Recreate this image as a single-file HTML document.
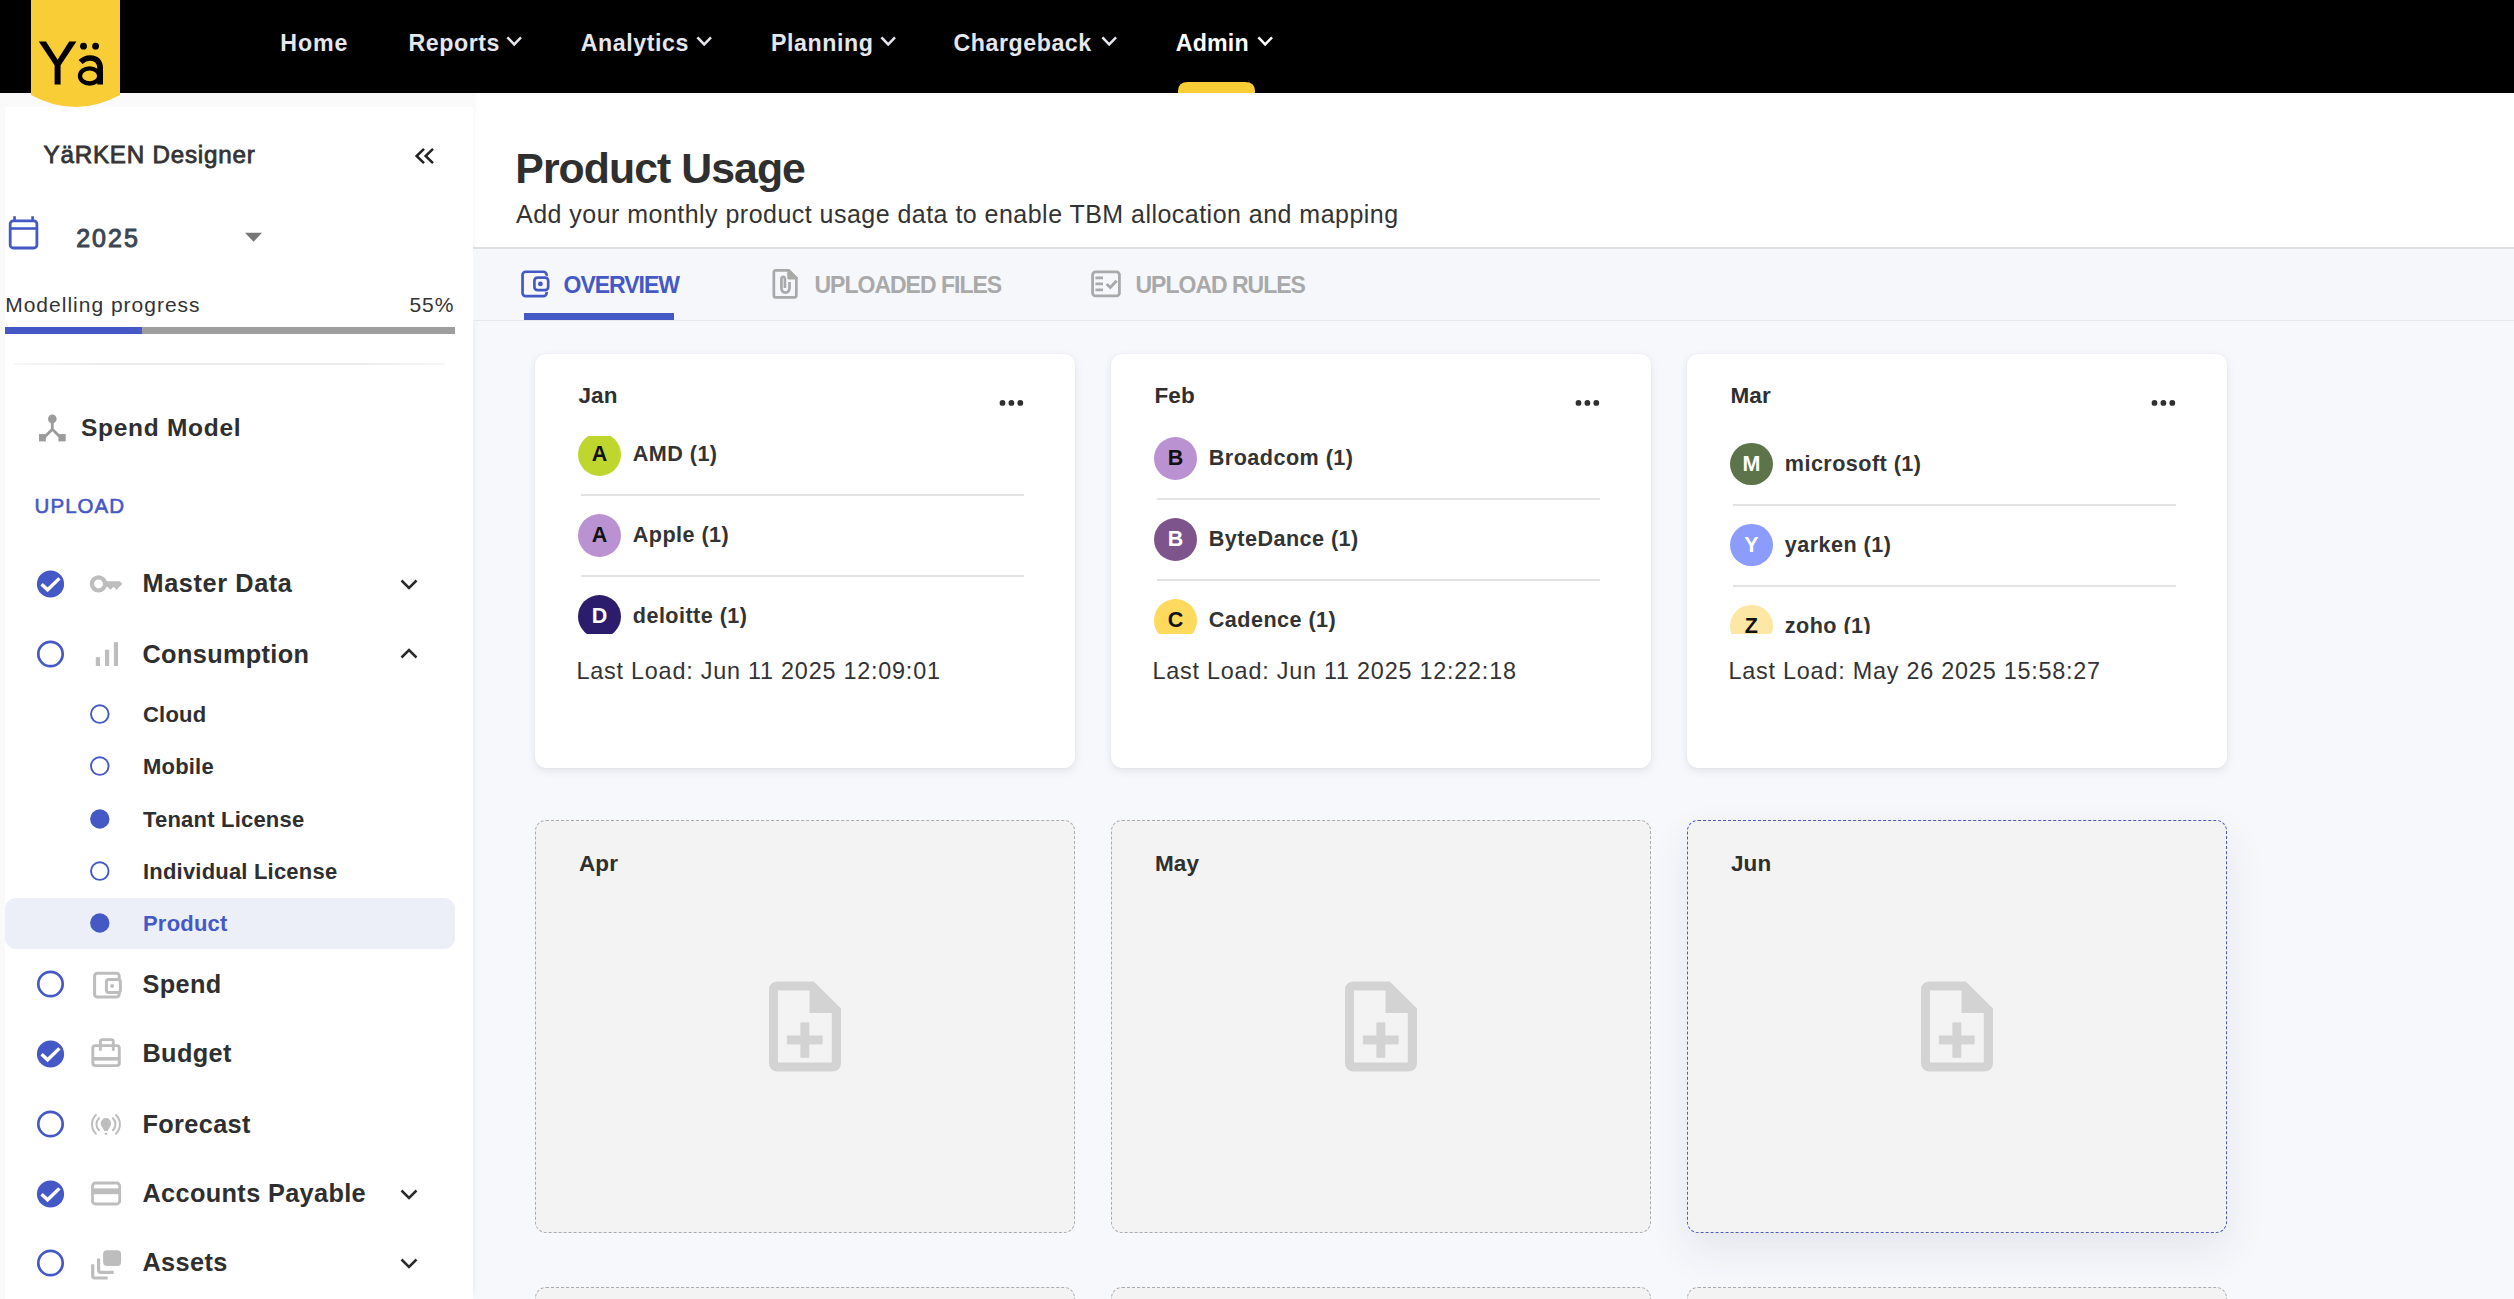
<!DOCTYPE html>
<html><head><meta charset="utf-8"><title>Product Usage</title>
<style>
html,body{margin:0;padding:0;}
body{width:2514px;height:1299px;overflow:hidden;position:relative;background:#f7f8fc;font-family:"Liberation Sans",sans-serif;}
.t{position:absolute;line-height:1;white-space:nowrap;}
svg{position:absolute;overflow:visible;}
</style></head><body>
<div style="position:absolute;left:0px;top:93px;width:473px;height:14px;background:#fafafb;"></div>
<div style="position:absolute;left:0px;top:93px;width:5px;height:1206px;background:#fafafb;"></div>
<div style="position:absolute;left:5px;top:107px;width:468px;height:1192px;background:#ffffff;box-shadow:5px 0 6px -5px rgba(40,50,90,0.08);"></div>
<div style="position:absolute;left:473px;top:93px;width:2041px;height:154px;background:#ffffff;box-shadow:inset 6px 0 6px -6px rgba(0,0,0,0.06);"></div>
<div style="position:absolute;left:473px;top:247px;width:2041px;height:1.5px;background:#dedfe3;"></div>
<div style="position:absolute;left:473px;top:248.5px;width:2041px;height:71.5px;background:#f6f7fb;"></div>
<div style="position:absolute;left:473px;top:320px;width:2041px;height:1px;background:#e6e7eb;"></div>
<div style="position:absolute;left:0px;top:0px;width:2514px;height:93px;background:#000;"></div>
<svg style="left:0;top:0" width="130" height="112"><path d="M31,0 H120 V95 Q75.5,119 31,95 Z" fill="#f9cd36"/></svg>
<svg style="left:0;top:0" width="130" height="100"><path d="M38.8,41.5 H46 L57.6,59.8 L69.2,41.5 H76.4 L60.6,65.2 V84.6 H54.6 V65.2 Z" fill="#000"/><path d="M80.6,62 C83.8,58.9 86.8,58 90.2,58 C96.6,58 100.15,61.6 100.15,68.5 V84.6" fill="none" stroke="#000" stroke-width="5.7"/><ellipse cx="89.6" cy="75.9" rx="9.6" ry="7.6" fill="none" stroke="#000" stroke-width="4.3"/><circle cx="83.5" cy="46.2" r="3.4" fill="#000"/><circle cx="95.6" cy="46.2" r="3.4" fill="#000"/></svg>
<div class="t" style="left:280.3px;top:31.7px;font-size:23.20px;font-weight:700;color:#e6e6ef;letter-spacing:0.90px;">Home</div>
<div class="t" style="left:408.5px;top:31.7px;font-size:23.20px;font-weight:700;color:#e6e6ef;letter-spacing:0.55px;">Reports</div>
<svg style="left:507px;top:37px" width="15" height="10"><path d="M1.2,1.2 L7.2,7.4 L13.2,1.2" fill="none" stroke="#e6e6ef" stroke-width="2.4" stroke-linecap="square"/></svg>
<div class="t" style="left:580.8px;top:31.7px;font-size:23.20px;font-weight:700;color:#e6e6ef;letter-spacing:0.55px;">Analytics</div>
<svg style="left:697px;top:37px" width="15" height="10"><path d="M1.2,1.2 L7.2,7.4 L13.2,1.2" fill="none" stroke="#e6e6ef" stroke-width="2.4" stroke-linecap="square"/></svg>
<div class="t" style="left:771.1px;top:31.7px;font-size:23.20px;font-weight:700;color:#e6e6ef;letter-spacing:0.55px;">Planning</div>
<svg style="left:880.5px;top:37px" width="15" height="10"><path d="M1.2,1.2 L7.2,7.4 L13.2,1.2" fill="none" stroke="#e6e6ef" stroke-width="2.4" stroke-linecap="square"/></svg>
<div class="t" style="left:953.5px;top:31.7px;font-size:23.20px;font-weight:700;color:#e6e6ef;letter-spacing:0.55px;">Chargeback</div>
<svg style="left:1101.6px;top:37px" width="15" height="10"><path d="M1.2,1.2 L7.2,7.4 L13.2,1.2" fill="none" stroke="#e6e6ef" stroke-width="2.4" stroke-linecap="square"/></svg>
<div class="t" style="left:1175.7px;top:31.7px;font-size:23.20px;font-weight:700;color:#ffffff;letter-spacing:0.20px;">Admin</div>
<svg style="left:1257.5px;top:37px" width="15" height="10"><path d="M1.2,1.2 L7.2,7.4 L13.2,1.2" fill="none" stroke="#ffffff" stroke-width="2.4" stroke-linecap="square"/></svg>
<svg style="left:1178px;top:82px" width="77" height="11"><path d="M0,11 V9 Q0,0 10,0 H67 Q77,0 77,9 V11 Z" fill="#f9cd36"/></svg>
<div class="t" style="left:43.5px;top:143.4px;font-size:24.20px;font-weight:400;color:#333333;letter-spacing:0.78px;-webkit-text-stroke:0.8px #333333;">YäRKEN Designer</div>
<svg style="left:410px;top:144px" width="30" height="24"><path d="M14,4.8 L6.6,12 L14,19.2 M23,4.8 L15.6,12 L23,19.2" fill="none" stroke="#222" stroke-width="2.5"/></svg>
<svg style="left:0;top:210px" width="50" height="45"><rect x="10.2" y="10.8" width="26.7" height="27.2" rx="3" fill="none" stroke="#4459c6" stroke-width="2.8"/><path d="M10.2,18.5 H36.9" stroke="#4459c6" stroke-width="2.6"/><path d="M14.55,6.2 V11 M32.6,6.2 V11" stroke="#4459c6" stroke-width="2.7"/></svg>
<div class="t" style="left:76.2px;top:225.6px;font-size:25.00px;font-weight:400;color:#3e4652;letter-spacing:2.00px;-webkit-text-stroke:1px #3e4652;">2025</div>
<svg style="left:240px;top:228px" width="30" height="20"><path d="M5,4.8 H22 L13.5,13.8 Z" fill="#777"/></svg>
<div class="t" style="left:5.2px;top:293.9px;font-size:21.00px;font-weight:400;color:#333333;letter-spacing:1.00px;">Modelling progress</div>
<div class="t" style="left:409.5px;top:293.9px;font-size:21.00px;font-weight:400;color:#333333;letter-spacing:0.90px;">55%</div>
<div style="position:absolute;left:5px;top:327px;width:450px;height:7px;background:#9e9e9e;"></div>
<div style="position:absolute;left:5px;top:327px;width:136.5px;height:7px;background:#4459c6;"></div>
<div style="position:absolute;left:14px;top:363px;width:431px;height:2px;background:linear-gradient(90deg,rgba(230,230,230,0.3),#ececec 20%,#ececec 80%,rgba(230,230,230,0.3));"></div>
<svg style="left:30px;top:405px" width="45" height="45"><circle cx="22.3" cy="13.9" r="4.3" fill="#9b9b9b"/><path d="M22.3,14 V24.2 M22.3,24.2 L13,33.5 M22.3,24.2 L31.6,33.5" fill="none" stroke="#9b9b9b" stroke-width="2.8"/><rect x="9" y="29.1" width="6.8" height="7.3" fill="#9b9b9b"/><rect x="28.4" y="29.1" width="7.3" height="7.3" fill="#9b9b9b"/></svg>
<div class="t" style="left:81.0px;top:416.3px;font-size:24.50px;font-weight:700;color:#2f2f2f;letter-spacing:0.71px;">Spend Model</div>
<div class="t" style="left:34.6px;top:495.9px;font-size:20.50px;font-weight:400;color:#4459c6;letter-spacing:1.05px;-webkit-text-stroke:0.6px #4459c6;">UPLOAD</div>
<svg style="left:30px;top:564px" width="42" height="40"><circle cx="20.5" cy="20" r="13.6" fill="#4459c6"/><path d="M11.6,20.2 L17.6,25.8 L29.4,14.4" fill="none" stroke="#fff" stroke-width="3.4"/></svg>
<svg style="left:85px;top:569px" width="42" height="30"><circle cx="13.5" cy="14.9" r="6.6" fill="none" stroke="#bdbdbd" stroke-width="4.2"/><path d="M19.5,12.2 H34.6 L37.4,14.7 L31.5,20.7 L28.6,17.8 L25.5,20.7 L22.3,17.8 H19.5 Z" fill="#bdbdbd"/></svg>
<div class="t" style="left:142.5px;top:571.1px;font-size:25.30px;font-weight:700;color:#2f2f2f;letter-spacing:0.60px;">Master Data</div>
<svg style="left:400px;top:579.2px" width="18" height="11"><path d="M1.5,1.5 L9,9 L16.5,1.5" fill="none" stroke="#2a2a2a" stroke-width="2.5"/></svg>
<svg style="left:30px;top:633.8px" width="42" height="40"><circle cx="20.5" cy="20" r="12.2" fill="none" stroke="#4459c6" stroke-width="2.7"/></svg>
<svg style="left:85px;top:638.8px" width="42" height="30"><rect x="10.8" y="18.2" width="4.2" height="8.8" fill="#bdbdbd"/><rect x="20" y="10.7" width="4.2" height="16.3" fill="#bdbdbd"/><rect x="28.9" y="3.2" width="4.1" height="23.8" fill="#bdbdbd"/></svg>
<div class="t" style="left:142.5px;top:641.6px;font-size:25.30px;font-weight:700;color:#2f2f2f;letter-spacing:0.35px;">Consumption</div>
<svg style="left:400px;top:648.0px" width="18" height="11"><path d="M1.5,9.5 L9,2 L16.5,9.5" fill="none" stroke="#2a2a2a" stroke-width="2.5"/></svg>
<svg style="left:30px;top:963.6px" width="42" height="40"><circle cx="20.5" cy="20" r="12.2" fill="none" stroke="#4459c6" stroke-width="2.7"/></svg>
<svg style="left:85px;top:968.6px" width="42" height="30"><rect x="9.6" y="4.3" width="24.6" height="23.8" rx="2.8" fill="none" stroke="#bdbdbd" stroke-width="3"/><rect x="21.4" y="10.5" width="14" height="13" rx="2.5" fill="#fff" stroke="#bdbdbd" stroke-width="3"/><circle cx="27.1" cy="16.9" r="2" fill="#bdbdbd"/></svg>
<div class="t" style="left:142.5px;top:971.6px;font-size:25.30px;font-weight:700;color:#2f2f2f;letter-spacing:0.35px;">Spend</div>
<svg style="left:30px;top:1034px" width="42" height="40"><circle cx="20.5" cy="20" r="13.6" fill="#4459c6"/><path d="M11.6,20.2 L17.6,25.8 L29.4,14.4" fill="none" stroke="#fff" stroke-width="3.4"/></svg>
<svg style="left:85px;top:1039px" width="42" height="30"><rect x="7.8" y="6.6" width="26.5" height="20" rx="2.6" fill="none" stroke="#bdbdbd" stroke-width="2.9"/><path d="M15.4,11.8 V2.6 Q15.4,0.7 17.3,0.7 H26.4 Q28.3,0.7 28.3,2.6 V11.8" fill="none" stroke="#bdbdbd" stroke-width="2.8"/><rect x="7.8" y="18" width="26.5" height="3.6" fill="#bdbdbd"/></svg>
<div class="t" style="left:142.5px;top:1041.4px;font-size:25.30px;font-weight:700;color:#2f2f2f;letter-spacing:0.35px;">Budget</div>
<svg style="left:30px;top:1103.5px" width="42" height="40"><circle cx="20.5" cy="20" r="12.2" fill="none" stroke="#4459c6" stroke-width="2.7"/></svg>
<svg style="left:85px;top:1108.5px" width="42" height="30"><path d="M10.9,5.9 A13.3,13.3 0 0 0 10.9,24.7 M14,9.3 A8.24,8.24 0 0 0 14,21.3 M31,5.9 A13.3,13.3 0 0 1 31,24.7 M27.9,9.3 A8.24,8.24 0 0 1 27.9,21.3" fill="none" stroke="#bdbdbd" stroke-width="2" stroke-linecap="round"/><path d="M16.1,16.2 A5.2,5.2 0 1 1 25.8,16.2 L22.6,21.9 H19.3 Z" fill="#bdbdbd"/><rect x="19.7" y="23.9" width="2.6" height="1.8" fill="#bdbdbd"/></svg>
<div class="t" style="left:142.5px;top:1112.0px;font-size:25.30px;font-weight:700;color:#2f2f2f;letter-spacing:0.35px;">Forecast</div>
<svg style="left:30px;top:1173.6px" width="42" height="40"><circle cx="20.5" cy="20" r="13.6" fill="#4459c6"/><path d="M11.6,20.2 L17.6,25.8 L29.4,14.4" fill="none" stroke="#fff" stroke-width="3.4"/></svg>
<svg style="left:85px;top:1178.6px" width="42" height="30"><rect x="7.5" y="4" width="27.2" height="21" rx="3" fill="none" stroke="#bdbdbd" stroke-width="2.8"/><rect x="7.5" y="9.4" width="27.2" height="5.8" fill="#bdbdbd"/></svg>
<div class="t" style="left:142.5px;top:1181.1px;font-size:25.30px;font-weight:700;color:#2f2f2f;letter-spacing:0.35px;">Accounts Payable</div>
<svg style="left:400px;top:1188.8px" width="18" height="11"><path d="M1.5,1.5 L9,9 L16.5,1.5" fill="none" stroke="#2a2a2a" stroke-width="2.5"/></svg>
<svg style="left:30px;top:1242.7px" width="42" height="40"><circle cx="20.5" cy="20" r="12.2" fill="none" stroke="#4459c6" stroke-width="2.7"/></svg>
<svg style="left:85px;top:1247.7px" width="42" height="30"><rect x="18.1" y="2.2" width="18" height="15.7" rx="4" fill="#bdbdbd"/><path d="M13.6,10.5 V22 Q13.6,24.3 15.9,24.3 H28.7" fill="none" stroke="#bdbdbd" stroke-width="3.2"/><path d="M7.7,16.3 V27.8 Q7.7,30 10,30 H22.7" fill="none" stroke="#bdbdbd" stroke-width="3.2"/></svg>
<div class="t" style="left:142.5px;top:1250.1px;font-size:25.30px;font-weight:700;color:#2f2f2f;letter-spacing:0.35px;">Assets</div>
<svg style="left:400px;top:1257.9px" width="18" height="11"><path d="M1.5,1.5 L9,9 L16.5,1.5" fill="none" stroke="#2a2a2a" stroke-width="2.5"/></svg>
<div style="position:absolute;left:5.4px;top:898px;width:449.4px;height:51.4px;border-radius:11px;background:#eceef8;"></div>
<svg style="left:85px;top:699.2px" width="30" height="30"><circle cx="14.8" cy="15.1" r="8.8" fill="none" stroke="#4459c6" stroke-width="1.9"/></svg>
<div class="t" style="left:143.0px;top:704.2px;font-size:22.00px;font-weight:700;color:#2f2f2f;letter-spacing:0.20px;">Cloud</div>
<svg style="left:85px;top:751.2px" width="30" height="30"><circle cx="14.8" cy="15.1" r="8.8" fill="none" stroke="#4459c6" stroke-width="1.9"/></svg>
<div class="t" style="left:143.0px;top:756.4px;font-size:22.00px;font-weight:700;color:#2f2f2f;letter-spacing:0.20px;">Mobile</div>
<svg style="left:85px;top:804px" width="30" height="30"><circle cx="14.8" cy="15" r="9.7" fill="#4459c6"/></svg>
<div class="t" style="left:143.0px;top:809.4px;font-size:22.00px;font-weight:700;color:#2f2f2f;letter-spacing:0.20px;">Tenant License</div>
<svg style="left:85px;top:856.3px" width="30" height="30"><circle cx="14.8" cy="15.1" r="8.8" fill="none" stroke="#4459c6" stroke-width="1.9"/></svg>
<div class="t" style="left:143.0px;top:861.2px;font-size:22.00px;font-weight:700;color:#2f2f2f;letter-spacing:0.20px;">Individual License</div>
<svg style="left:85px;top:908.2px" width="30" height="30"><circle cx="14.8" cy="15" r="9.7" fill="#4459c6"/></svg>
<div class="t" style="left:143.0px;top:913.2px;font-size:22.00px;font-weight:700;color:#4459c6;letter-spacing:0.20px;">Product</div>
<div class="t" style="left:515.3px;top:147.1px;font-size:42.80px;font-weight:700;color:#2f2f2f;letter-spacing:-0.95px;">Product Usage</div>
<div class="t" style="left:516.0px;top:201.6px;font-size:25.00px;font-weight:400;color:#333333;letter-spacing:0.47px;">Add your monthly product usage data to enable TBM allocation and mapping</div>
<svg style="left:510px;top:260px" width="50" height="50"><rect x="12.55" y="11.75" width="24" height="24.4" rx="3.2" fill="none" stroke="#4459c6" stroke-width="2.7"/><rect x="24.4" y="17.7" width="13.8" height="12.4" rx="3" fill="#ffffff" stroke="#ffffff" stroke-width="4.3"/><rect x="24.4" y="17.7" width="13.8" height="12.4" rx="3" fill="#f6f7fb" stroke="#4459c6" stroke-width="2.7"/><circle cx="30.4" cy="23.9" r="2.4" fill="#4459c6"/></svg>
<div class="t" style="left:563.5px;top:273.5px;font-size:23.00px;font-weight:700;color:#4459c6;letter-spacing:-1.00px;">OVERVIEW</div>
<div style="position:absolute;left:524px;top:313px;width:150px;height:7px;background:#4459c6;"></div>
<svg style="left:760px;top:260px" width="50" height="50"><path d="M15.2,10.35 H28.6 L36.35,18.1 V35.2 Q36.35,37.35 34.2,37.35 H15.8 Q13.85,37.35 13.85,35.2 V12.5 Q13.85,10.35 15.8,10.35 Z" fill="none" stroke="#a9a9a9" stroke-width="2.7"/><path d="M28.6,10.35 V18.1 H36.35 Z" fill="#a9a9a9" stroke="#a9a9a9" stroke-width="2.7" stroke-linejoin="round"/><path d="M24.9,28 V19.6 Q24.9,16.9 23.2,16.9 Q21.4,16.9 21.4,19.6 V27.8 Q21.4,32.6 25.4,32.6 Q29.5,32.6 29.5,27.8 V22" fill="none" stroke="#a9a9a9" stroke-width="2.7"/></svg>
<div class="t" style="left:814.5px;top:273.5px;font-size:23.00px;font-weight:700;color:#a9a9a9;letter-spacing:-1.00px;">UPLOADED FILES</div>
<svg style="left:1080px;top:260px" width="50" height="50"><rect x="12.6" y="11.8" width="26.8" height="24.1" rx="3" fill="none" stroke="#a9a9a9" stroke-width="2.8"/><path d="M15.4,17.9 H23 M15.4,23.9 H23 M15.4,29.8 H23" stroke="#a9a9a9" stroke-width="2.7"/><path d="M26.6,24 L30.3,27.5 L36.6,20.8" fill="none" stroke="#a9a9a9" stroke-width="2.9"/></svg>
<div class="t" style="left:1135.5px;top:273.5px;font-size:23.00px;font-weight:700;color:#a9a9a9;letter-spacing:-1.00px;">UPLOAD RULES</div>
<div style="position:absolute;left:535px;top:354px;width:540px;height:414px;border-radius:11px;background:#fff;box-shadow:0 3px 9px rgba(40,50,90,0.10),0 0 2px rgba(40,50,90,0.05);"></div><div class="t" style="left:578.5px;top:385.0px;font-size:22.50px;font-weight:700;color:#2f2f2f;letter-spacing:0.10px;">Jan</div><svg style="left:995px;top:394px" width="34" height="18"><circle cx="7.5" cy="8.9" r="2.9" fill="#2f2f2f"/><circle cx="16.4" cy="8.9" r="2.9" fill="#2f2f2f"/><circle cx="25.3" cy="8.9" r="2.9" fill="#2f2f2f"/></svg><div style="position:absolute;left:535px;top:436px;width:540px;height:198px;overflow:hidden;"><div style="position:absolute;left:43px;top:-3.0px;width:42.8px;height:42.8px;border-radius:50%;background:#bfd62f;"></div><div class="t" style="left:43px;width:42.8px;text-align:center;top:7.8px;font-size:21.5px;font-weight:700;color:#111;">A</div><div class="t" style="left:97.8px;top:7.0px;font-size:21.6px;font-weight:700;color:#333;letter-spacing:0.45px;">AMD (1)</div><div style="position:absolute;left:46px;top:57.8px;width:443px;height:2px;background:#e3e3e3;"></div><div style="position:absolute;left:43px;top:78.0px;width:42.8px;height:42.8px;border-radius:50%;background:#bb92d1;"></div><div class="t" style="left:43px;width:42.8px;text-align:center;top:88.8px;font-size:21.5px;font-weight:700;color:#111;">A</div><div class="t" style="left:97.8px;top:88.0px;font-size:21.6px;font-weight:700;color:#333;letter-spacing:0.45px;">Apple (1)</div><div style="position:absolute;left:46px;top:138.8px;width:443px;height:2px;background:#e3e3e3;"></div><div style="position:absolute;left:43px;top:159.0px;width:42.8px;height:42.8px;border-radius:50%;background:#2c1d6c;"></div><div class="t" style="left:43px;width:42.8px;text-align:center;top:169.8px;font-size:21.5px;font-weight:700;color:#fff;">D</div><div class="t" style="left:97.8px;top:169.0px;font-size:21.6px;font-weight:700;color:#333;letter-spacing:0.45px;">deloitte (1)</div></div><div class="t" style="left:576.5px;top:660.0px;font-size:23.40px;font-weight:400;color:#333333;letter-spacing:0.77px;">Last Load: Jun 11 2025 12:09:01</div>
<div style="position:absolute;left:1111px;top:354px;width:540px;height:414px;border-radius:11px;background:#fff;box-shadow:0 3px 9px rgba(40,50,90,0.10),0 0 2px rgba(40,50,90,0.05);"></div><div class="t" style="left:1154.5px;top:385.0px;font-size:22.50px;font-weight:700;color:#2f2f2f;letter-spacing:0.10px;">Feb</div><svg style="left:1571px;top:394px" width="34" height="18"><circle cx="7.5" cy="8.9" r="2.9" fill="#2f2f2f"/><circle cx="16.4" cy="8.9" r="2.9" fill="#2f2f2f"/><circle cx="25.3" cy="8.9" r="2.9" fill="#2f2f2f"/></svg><div style="position:absolute;left:1111px;top:436px;width:540px;height:198px;overflow:hidden;"><div style="position:absolute;left:43px;top:1.0px;width:42.8px;height:42.8px;border-radius:50%;background:#bb92d1;"></div><div class="t" style="left:43px;width:42.8px;text-align:center;top:11.8px;font-size:21.5px;font-weight:700;color:#111;">B</div><div class="t" style="left:97.8px;top:11.0px;font-size:21.6px;font-weight:700;color:#333;letter-spacing:0.45px;">Broadcom (1)</div><div style="position:absolute;left:46px;top:61.8px;width:443px;height:2px;background:#e3e3e3;"></div><div style="position:absolute;left:43px;top:82.0px;width:42.8px;height:42.8px;border-radius:50%;background:#7e548c;"></div><div class="t" style="left:43px;width:42.8px;text-align:center;top:92.8px;font-size:21.5px;font-weight:700;color:#fff;">B</div><div class="t" style="left:97.8px;top:92.0px;font-size:21.6px;font-weight:700;color:#333;letter-spacing:0.45px;">ByteDance (1)</div><div style="position:absolute;left:46px;top:142.8px;width:443px;height:2px;background:#e3e3e3;"></div><div style="position:absolute;left:43px;top:163.0px;width:42.8px;height:42.8px;border-radius:50%;background:#fdd95c;"></div><div class="t" style="left:43px;width:42.8px;text-align:center;top:173.8px;font-size:21.5px;font-weight:700;color:#111;">C</div><div class="t" style="left:97.8px;top:173.0px;font-size:21.6px;font-weight:700;color:#333;letter-spacing:0.45px;">Cadence (1)</div></div><div class="t" style="left:1152.5px;top:660.0px;font-size:23.40px;font-weight:400;color:#333333;letter-spacing:0.77px;">Last Load: Jun 11 2025 12:22:18</div>
<div style="position:absolute;left:1687px;top:354px;width:540px;height:414px;border-radius:11px;background:#fff;box-shadow:0 3px 9px rgba(40,50,90,0.10),0 0 2px rgba(40,50,90,0.05);"></div><div class="t" style="left:1730.5px;top:385.0px;font-size:22.50px;font-weight:700;color:#2f2f2f;letter-spacing:0.10px;">Mar</div><svg style="left:2147px;top:394px" width="34" height="18"><circle cx="7.5" cy="8.9" r="2.9" fill="#2f2f2f"/><circle cx="16.4" cy="8.9" r="2.9" fill="#2f2f2f"/><circle cx="25.3" cy="8.9" r="2.9" fill="#2f2f2f"/></svg><div style="position:absolute;left:1687px;top:436px;width:540px;height:198px;overflow:hidden;"><div style="position:absolute;left:43px;top:6.7px;width:42.8px;height:42.8px;border-radius:50%;background:#5d744a;"></div><div class="t" style="left:43px;width:42.8px;text-align:center;top:17.5px;font-size:21.5px;font-weight:700;color:#fff;">M</div><div class="t" style="left:97.8px;top:16.7px;font-size:21.6px;font-weight:700;color:#333;letter-spacing:0.45px;">microsoft (1)</div><div style="position:absolute;left:46px;top:67.5px;width:443px;height:2px;background:#e3e3e3;"></div><div style="position:absolute;left:43px;top:87.7px;width:42.8px;height:42.8px;border-radius:50%;background:#8b9cfd;"></div><div class="t" style="left:43px;width:42.8px;text-align:center;top:98.5px;font-size:21.5px;font-weight:700;color:#fff;">Y</div><div class="t" style="left:97.8px;top:97.7px;font-size:21.6px;font-weight:700;color:#333;letter-spacing:0.45px;">yarken (1)</div><div style="position:absolute;left:46px;top:148.5px;width:443px;height:2px;background:#e3e3e3;"></div><div style="position:absolute;left:43px;top:168.7px;width:42.8px;height:42.8px;border-radius:50%;background:#fde7a5;"></div><div class="t" style="left:43px;width:42.8px;text-align:center;top:179.5px;font-size:21.5px;font-weight:700;color:#111;">Z</div><div class="t" style="left:97.8px;top:178.7px;font-size:21.6px;font-weight:700;color:#333;letter-spacing:0.45px;">zoho (1)</div></div><div class="t" style="left:1728.5px;top:660.0px;font-size:23.40px;font-weight:400;color:#333333;letter-spacing:0.77px;">Last Load: May 26 2025 15:58:27</div>
<div style="position:absolute;left:535px;top:820px;width:537.5px;height:411px;border-radius:11px;background:#f3f3f3;border:1.5px dashed #ababab;"></div><div class="t" style="left:579.0px;top:852.6px;font-size:22.50px;font-weight:700;color:#2f2f2f;letter-spacing:0.10px;">Apr</div><svg style="left:768.7px;top:981.4px" width="74" height="92"><path fill-rule="evenodd" fill="#d3d3d3" d="M9,0.5 H44.7 L72,27.5 V81.4 Q72,90.4 63,90.4 H9 Q0,90.4 0,81.4 V9.5 Q0,0.5 9,0.5 Z M8.9,9.6 V81.5 H62.8 V32 H40.5 V9.6 Z"/><rect x="31.4" y="41.4" width="8.9" height="35.4" fill="#d3d3d3"/><rect x="17.9" y="54.5" width="35.8" height="8.9" fill="#d3d3d3"/></svg>
<div style="position:absolute;left:1111px;top:820px;width:537.5px;height:411px;border-radius:11px;background:#f3f3f3;border:1.5px dashed #ababab;"></div><div class="t" style="left:1155.0px;top:852.6px;font-size:22.50px;font-weight:700;color:#2f2f2f;letter-spacing:0.10px;">May</div><svg style="left:1344.7px;top:981.4px" width="74" height="92"><path fill-rule="evenodd" fill="#d3d3d3" d="M9,0.5 H44.7 L72,27.5 V81.4 Q72,90.4 63,90.4 H9 Q0,90.4 0,81.4 V9.5 Q0,0.5 9,0.5 Z M8.9,9.6 V81.5 H62.8 V32 H40.5 V9.6 Z"/><rect x="31.4" y="41.4" width="8.9" height="35.4" fill="#d3d3d3"/><rect x="17.9" y="54.5" width="35.8" height="8.9" fill="#d3d3d3"/></svg>
<div style="position:absolute;left:1687px;top:820px;width:537.5px;height:411px;border-radius:11px;background:#f3f3f3;border:1.5px dashed #4a5bc4;box-shadow:0 18px 40px rgba(40,50,90,0.09);"></div><div class="t" style="left:1731.0px;top:852.6px;font-size:22.50px;font-weight:700;color:#2f2f2f;letter-spacing:0.10px;">Jun</div><svg style="left:1920.7px;top:981.4px" width="74" height="92"><path fill-rule="evenodd" fill="#d3d3d3" d="M9,0.5 H44.7 L72,27.5 V81.4 Q72,90.4 63,90.4 H9 Q0,90.4 0,81.4 V9.5 Q0,0.5 9,0.5 Z M8.9,9.6 V81.5 H62.8 V32 H40.5 V9.6 Z"/><rect x="31.4" y="41.4" width="8.9" height="35.4" fill="#d3d3d3"/><rect x="17.9" y="54.5" width="35.8" height="8.9" fill="#d3d3d3"/></svg>
<div style="position:absolute;left:535px;top:1287px;width:537.5px;height:411px;border-radius:11px;background:#f3f3f3;border:1.5px dashed #ababab;"></div><div class="t" style="left:579.0px;top:1319.6px;font-size:22.50px;font-weight:700;color:#2f2f2f;letter-spacing:0.10px;"></div><svg style="left:768.7px;top:1448.4px" width="74" height="92"><path fill-rule="evenodd" fill="#d3d3d3" d="M9,0.5 H44.7 L72,27.5 V81.4 Q72,90.4 63,90.4 H9 Q0,90.4 0,81.4 V9.5 Q0,0.5 9,0.5 Z M8.9,9.6 V81.5 H62.8 V32 H40.5 V9.6 Z"/><rect x="31.4" y="41.4" width="8.9" height="35.4" fill="#d3d3d3"/><rect x="17.9" y="54.5" width="35.8" height="8.9" fill="#d3d3d3"/></svg>
<div style="position:absolute;left:1111px;top:1287px;width:537.5px;height:411px;border-radius:11px;background:#f3f3f3;border:1.5px dashed #ababab;"></div><div class="t" style="left:1155.0px;top:1319.6px;font-size:22.50px;font-weight:700;color:#2f2f2f;letter-spacing:0.10px;"></div><svg style="left:1344.7px;top:1448.4px" width="74" height="92"><path fill-rule="evenodd" fill="#d3d3d3" d="M9,0.5 H44.7 L72,27.5 V81.4 Q72,90.4 63,90.4 H9 Q0,90.4 0,81.4 V9.5 Q0,0.5 9,0.5 Z M8.9,9.6 V81.5 H62.8 V32 H40.5 V9.6 Z"/><rect x="31.4" y="41.4" width="8.9" height="35.4" fill="#d3d3d3"/><rect x="17.9" y="54.5" width="35.8" height="8.9" fill="#d3d3d3"/></svg>
<div style="position:absolute;left:1687px;top:1287px;width:537.5px;height:411px;border-radius:11px;background:#f3f3f3;border:1.5px dashed #ababab;"></div><div class="t" style="left:1731.0px;top:1319.6px;font-size:22.50px;font-weight:700;color:#2f2f2f;letter-spacing:0.10px;"></div><svg style="left:1920.7px;top:1448.4px" width="74" height="92"><path fill-rule="evenodd" fill="#d3d3d3" d="M9,0.5 H44.7 L72,27.5 V81.4 Q72,90.4 63,90.4 H9 Q0,90.4 0,81.4 V9.5 Q0,0.5 9,0.5 Z M8.9,9.6 V81.5 H62.8 V32 H40.5 V9.6 Z"/><rect x="31.4" y="41.4" width="8.9" height="35.4" fill="#d3d3d3"/><rect x="17.9" y="54.5" width="35.8" height="8.9" fill="#d3d3d3"/></svg>
</body></html>
